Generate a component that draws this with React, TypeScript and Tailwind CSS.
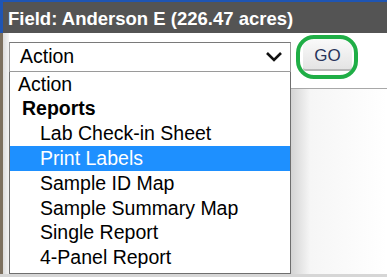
import React from "react";

const items: { label: string; kind: "top" | "group" | "item"; selected?: boolean }[] = [
  { label: "Action", kind: "top" },
  { label: "Reports", kind: "group" },
  { label: "Lab Check-in Sheet", kind: "item" },
  { label: "Print Labels", kind: "item", selected: true },
  { label: "Sample ID Map", kind: "item" },
  { label: "Sample Summary Map", kind: "item" },
  { label: "Single Report", kind: "item" },
  { label: "4-Panel Report", kind: "item" },
];

export default function App() {
  return (
    <div
      className="relative w-[387px] h-[277px] overflow-hidden bg-white flex flex-col"
      style={{ fontFamily: '"Liberation Sans", Arial, sans-serif' }}
    >
      {/* top blue line */}
      <div className="h-[2px] bg-[#1f55b3] shrink-0" />
      {/* header */}
      <div className="h-[31px] shrink-0 flex">
        <div className="w-[3px] bg-[#1f55b3]" />
        <div className="flex-1 bg-[#545454] flex items-center pl-[5px] pt-[3px]">
          <span className="text-white font-bold text-[18.5px] leading-none whitespace-nowrap">
            Field: Anderson E (226.47 acres)
          </span>
        </div>
      </div>
      {/* body */}
      <div className="flex-1 flex min-h-0">
        {/* left strip */}
        <div className="w-[3px] bg-[#7c705f] shrink-0" />
        <div className="w-[6px] bg-gradient-to-r from-[#dcdcdc] to-[#f4f4f4] shrink-0" />
        {/* select + list column */}
        <div className="w-[282px] shrink-0 flex flex-col pt-[9px]">
          <div className="h-[30px] border border-[#9a9a9a] border-t-[#7a7a7a] bg-white flex items-center pl-[10px] pr-[7px]">
            <span className="text-[19.5px] text-black flex-1 leading-none">Action</span>
            <svg width="18" height="11" viewBox="0 0 18 11" className="mr-[0px]">
              <polyline points="2,2 9,9 16,2" fill="none" stroke="#111" strokeWidth="2.6" />
            </svg>
          </div>
          <div className="h-[203px] border border-t-0 border-[#6e6e6e] bg-white flex flex-col">
            {items.map((it) => (
              <div
                key={it.label}
                className={
                  "h-[24.8px] shrink-0 flex items-center text-[19.5px] leading-none whitespace-nowrap " +
                  (it.selected ? "bg-[#1e90ff] text-white " : "text-black ") +
                  (it.kind === "top" ? "pl-[8px]" : it.kind === "group" ? "pl-[12px] font-bold" : "pl-[30px]")
                }
              >
                {it.label}
              </div>
            ))}
          </div>
        </div>
        {/* right column */}
        <div className="flex-1 flex flex-col">
          <div className="h-[55px] shrink-0 flex items-start pl-[12px] pt-[6px]">
            <div className="w-[49px] h-[32px] bg-gradient-to-b from-[#fafafa] to-[#e4e4e4] rounded-[3px] flex flex-col items-center justify-center border-b-[2px] border-[#b8b8b8]">
              <span className="text-[17px] text-[#27345a] leading-none pt-[2px]">GO</span>
            </div>
          </div>
          <div className="h-[1px] bg-[#a8a8a8] shrink-0" />
          <div className="flex-1 bg-gradient-to-r from-[#d4d4d4] via-[#f6f6f6] via-20% to-white" />
        </div>
      </div>
      {/* bottom line */}
      <div className="h-[3px] bg-[#d6d6d6] shrink-0" />
      {/* green annotation oval */}
      <div className="absolute left-[296px] top-[35px] w-[62px] h-[44px] border-[4px] border-[#1fae46] rounded-[18px]" />
    </div>
  );
}
